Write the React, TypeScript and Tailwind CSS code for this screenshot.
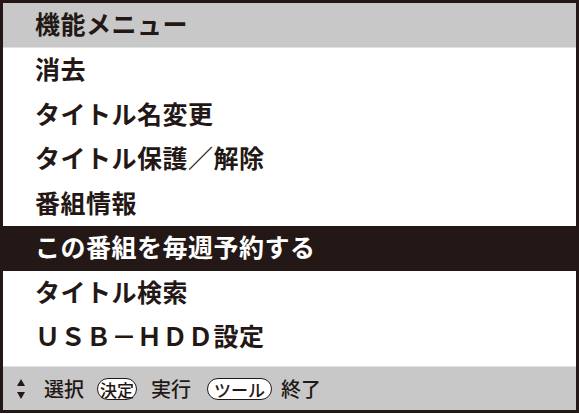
import React from 'react';

const items = [
  '消去',
  'タイトル名変更',
  'タイトル保護／解除',
  '番組情報',
  'この番組を毎週予約する',
  'タイトル検索',
  'ＵＳＢ－ＨＤＤ設定',
];

const SELECTED = 4;

const font = { fontFamily: '"Noto Sans CJK JP", "Noto Sans", sans-serif' };

const Pill = ({ label, wide }: { label: string; wide?: boolean }) => (
  <span
    className={`inline-flex items-center justify-center h-[22px] rounded-full border-[1.5px] border-[#231815] bg-white text-[17px] leading-none font-medium ${
      wide ? 'w-[65px]' : 'w-[40px]'
    }`}
  >
    {label}
  </span>
);

const App = () => {
  return (
    <div className="w-[579px] h-[414px] bg-white" style={font}>
      <div className="w-[579px] h-[413px] border-[3px] border-[#231815] flex flex-col text-[#231815]">
        <div className="h-[44px] shrink-0 bg-[#c8c8c8] flex items-center pl-[32px] pb-[3px] text-[25px] font-bold tracking-[0.5px]">
          機能メニュー
        </div>
        <div className="h-px shrink-0 bg-[#e2e2e2]"></div>
        <div className="flex-1 flex flex-col">
          {items.map((item, i) => (
            <div
              key={i}
              className={`h-[44.5px] shrink-0 flex items-center pl-[32px] pb-[3px] text-[25px] font-bold tracking-[0.5px] ${
                i === SELECTED ? 'bg-[#231815] text-white' : ''
              }`}
            >
              {item}
            </div>
          ))}
        </div>
        <div className="h-px shrink-0 bg-[#e2e2e2]"></div>
        <div className="h-[43px] shrink-0 bg-[#c8c8c8] flex items-center pl-[13px] text-[20px] font-medium">
          <svg width="10" height="22" viewBox="0 0 10 22" className="mr-[18px]">
            <polygon points="5,1 9,8 1,8" fill="#231815" />
            <polygon points="1,14 9,14 5,21" fill="#231815" />
          </svg>
          <span>選択</span>
          <span className="ml-[13px]">
            <Pill label="決定" />
          </span>
          <span className="ml-[14px]">実行</span>
          <span className="ml-[16px]">
            <Pill label="ツール" wide />
          </span>
          <span className="ml-[9px]">終了</span>
        </div>
      </div>
    </div>
  );
};

export default App;
